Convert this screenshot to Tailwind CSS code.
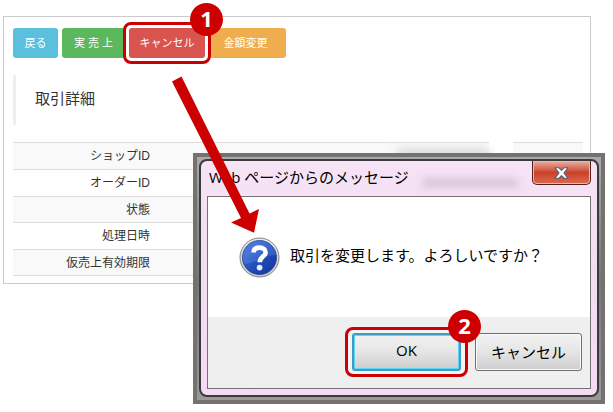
<!DOCTYPE html>
<html lang="ja">
<head>
<meta charset="utf-8">
<meta name="viewport" content="width=device-width, initial-scale=1">
<title>取引詳細</title>
<script src="https://cdn.jsdelivr.net/npm/@tailwindcss/browser@4"></script>
</head>
<body class="relative min-h-screen bg-white pt-4 pr-[22px] pl-[3px] font-['Liberation_Sans','Noto_Sans_CJK_JP',sans-serif] text-[#333]">

<main class="border border-[#ccc] pt-[11px] pr-[7px] pb-[7px] pl-[9px]">
  <nav class="flex h-[30px] gap-1 text-[11px] leading-[30px] text-white" aria-label="操作">
    <button type="button" class="w-[45px] rounded-[3px] bg-[#5bc0de]">戻る</button>
    <button type="button" class="w-[63px] rounded-[3px] bg-[#5cb85c]">実 売 上</button>
    <div class="relative z-10 -mx-[6px] -my-[6px] h-[42px] w-[88px] rounded-lg border-3 border-[#c00] bg-white p-[3px]">
      <button type="button" class="h-[30px] w-full rounded-[3px] bg-[#d9534f]">キャンセル</button>
      <span class="absolute -top-[22px] -right-[15px] grid size-[33px] place-items-center rounded-full bg-[#c00] pb-1 font-['Open_Sans',sans-serif] text-[22px] leading-none font-bold">1</span>
    </div>
    <button type="button" class="w-[77px] rounded-[3px] bg-[#f0ad4e] pr-1">金額変更</button>
  </nav>

  <h1 class="mt-[17px] h-[50px] border-l-3 border-[#eee] pl-[19px] text-[15px] leading-[48px]">取引詳細</h1>

  <div class="mt-[17px] grid grid-cols-[1fr_70px] gap-6 text-[12px]">
    <table class="w-full table-fixed border-collapse">
      <tbody>
        <tr class="h-[27px] border-t border-[#ddd] bg-[#f9f9f9]"><th scope="row" class="w-[137px] p-0 text-right font-normal">ショップID</th><td class="p-0"><div class="ml-auto h-4 w-[92px] bg-[#ddd] blur-xs"></div></td></tr>
        <tr class="h-[27px] border-t border-[#ddd]"><th scope="row" class="p-0 text-right font-normal">オーダーID</th><td></td></tr>
        <tr class="h-[26px] border-t border-[#ddd] bg-[#f9f9f9]"><th scope="row" class="p-0 text-right font-normal">状態</th><td></td></tr>
        <tr class="h-[27px] border-t border-[#ddd]"><th scope="row" class="p-0 text-right font-normal">処理日時</th><td></td></tr>
        <tr class="h-[26px] border-y border-[#ddd] bg-[#f9f9f9]"><th scope="row" class="p-0 text-right font-normal">仮売上有効期限</th><td></td></tr>
      </tbody>
    </table>
    <div class="h-[27px] border-t border-[#ddd] bg-[#f9f9f9]"></div>
  </div>
</main>

<section role="dialog" aria-labelledby="dialog-title" class="absolute top-[153px] right-2 left-[193px] border-4 border-[#767171] bg-linear-to-b from-[#aaa] via-[#777] to-[#999] px-[2px] pt-[2px] pb-[3px] font-['Open_Sans','Noto_Sans_CJK_JP',sans-serif] text-[15px] text-black">
  <div class="rounded-lg border-2 border-[#3c3a3c] bg-linear-to-b from-[#f6e4f6] via-[#f0def0] to-[#f6daf4] px-[6px] pb-[6px]">
    <header class="flex h-[35px] items-start justify-between">
      <h2 id="dialog-title" class="pl-[2px] leading-8 whitespace-nowrap">Web ページからのメッセージ</h2>
      <div class="mt-[18px] mr-[14px] ml-auto h-2 w-[96px] bg-[#cfc2d1] blur-xs"></div>
      <button type="button" aria-label="閉じる" class="grid h-[24px] w-[59px] place-items-center rounded-b-[5px] border border-t-0 border-[#51211d] bg-linear-to-b from-[#e6b0a4] from-0% via-[#c9402a] via-50% to-[#de6a4c] inset-shadow-[0_0_0_1px_#efb7a8]">
        <svg class="h-3 w-[15px]" viewBox="0 0 15 12" aria-hidden="true"><path d="M1 .8H5L7.500 3.300 10 .8H14L9.900 6 14 11.200H10L7.500 8.700 5 11.200H1L5.100 6Z" fill="#fff" stroke="#54607a" stroke-width="1.100" stroke-linejoin="round"/></svg>
      </button>
    </header>
    <div class="border border-[#777077] bg-white">
      <div class="flex h-[120px] items-center gap-[10px] pl-[31px]">
        <svg class="size-[41px] shrink-0" viewBox="0 0 41 41" aria-hidden="true">
          <defs>
            <linearGradient id="ball" x1="0" y1="0" x2="1" y2="1"><stop offset="0" stop-color="#4a7be0"/><stop offset=".5" stop-color="#2450bd"/><stop offset="1" stop-color="#12309a"/></linearGradient>
            <linearGradient id="rim" x1="0" y1="0" x2="0" y2="1"><stop offset="0" stop-color="#e8e8e8"/><stop offset="1" stop-color="#c4c4c4"/></linearGradient>
          </defs>
          <circle cx="20.5" cy="20.5" r="19.5" fill="url(#rim)" stroke="#858585"/>
          <circle cx="20.5" cy="20.5" r="17" fill="url(#ball)" stroke="#1c3b92" stroke-width=".8"/>
          <path d="M4 22A16.5 16.5 0 0 1 37 18C28 17 17 26 5.500 27Z" fill="#6b98ee" opacity=".3"/>
          <path d="M14.600 15.500C14.600 11.800 17.100 10.600 20.500 10.600S26.600 12.300 26.600 15.400C26.600 19.600 20.700 19.800 20.700 25.300" fill="none" stroke="#fff" stroke-width="4.600"/>
          <circle cx="20.600" cy="30.600" r="2.900" fill="#e8edf8"/>
        </svg>
        <p class="pb-1 whitespace-nowrap">取引を変更します。よろしいですか？</p>
      </div>
      <footer class="flex h-[71px] justify-end gap-[7px] bg-[#efefef] pt-[10px] pr-2">
        <div class="relative h-[50px] w-[123px] rounded-lg border-3 border-[#c00] bg-[#f4f4f4] px-[4px] py-[3px]">
          <button type="button" class="h-[38px] w-full rounded-[3px] border-2 border-[#3c9cc4] bg-linear-to-b from-[#f2f2f2] from-0% via-[#e6e6e6] via-48% to-[#cdcdcd] pb-1 inset-shadow-[0_0_0_1px_#5fd4f4]">OK</button>
          <span class="absolute -top-[20px] -right-4 grid size-[33px] place-items-center rounded-full bg-[#c00] pb-1 font-['Open_Sans',sans-serif] text-[22px] leading-none font-bold text-white">2</span>
        </div>
        <button type="button" class="mt-[6px] h-[38px] w-[107px] rounded-[3px] border border-[#707070] bg-linear-to-b from-[#f2f2f2] from-0% via-[#e6e6e6] via-48% to-[#cdcdcd] inset-shadow-[0_0_0_1px_#fafafa]">キャンセル</button>
      </footer>
    </div>
  </div>
</section>

<svg class="pointer-events-none absolute top-[76px] left-[172px] h-[157px] w-[88px]" viewBox="172 76 88 157" aria-hidden="true"><path d="M172 81.500 181.500 76.500 249.500 213.500 259 209 254 232.700 231 222.600 241 218Z" fill="#c00"/></svg>
</body>
</html>
